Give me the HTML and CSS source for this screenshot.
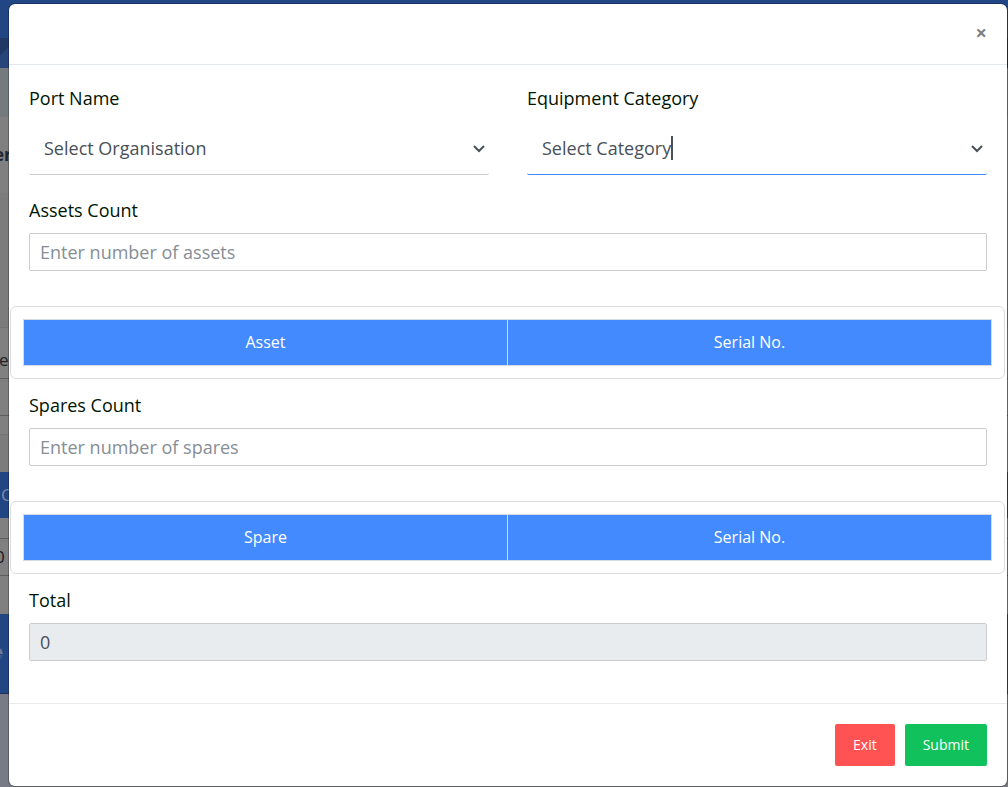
FILE: index.html
```html
<!DOCTYPE html>
<html lang="en">
<head>
<meta charset="utf-8">
<meta name="viewport" content="width=device-width, initial-scale=1">
<title>Equipment count</title>
<link rel="stylesheet" href="styles.css">
</head>
<body>
<div class="screen">
  <div class="page" aria-hidden="true">
    <div class="band band-top"></div>
    <div class="band band-nav"></div>
    <div class="band band-crumb"></div>
    <div class="band band-title"><b>er</b></div>
    <div class="band band-space"></div>
    <div class="band band-row"><span>e</span></div>
    <div class="band band-line"></div>
    <div class="band band-end"></div>
    <div class="band band-gap"></div>
    <div class="band band-head"><span class="clip-right">C</span></div>
    <div class="band band-blank"></div>
    <div class="band band-cell"><span class="clip-left">0</span></div>
    <div class="band band-rest"></div>
    <div class="band band-foot"><svg viewBox="0 0 9 14" width="9" height="14"><path d="M-2 7L1 1L3 7Z" fill="#6f7c98"/><path d="M-2 8H3L1 13Z" fill="#3a5689"/></svg></div>
    <div class="band band-bottom"></div>
  </div>

  <form class="modal" role="dialog" aria-label="Equipment count">
    <header class="modal-header">
      <button type="button" class="close" aria-label="Close">×</button>
    </header>

    <div class="modal-body">
      <div class="columns">
        <div class="field">
          <label for="port">Port Name</label>
          <div class="picker">
            <select id="port"><option>Select Organisation</option></select>
            <svg class="chevron" viewBox="0 0 12 8" width="12" height="8"><path d="M1 1L6 6L11 1" fill="none" stroke="#495057" stroke-width="2"/></svg>
          </div>
        </div>
        <div class="field">
          <label for="category">Equipment Category</label>
          <div class="picker picker-active">
            <select id="category"><option>Select Category</option></select>
            <span class="caret"></span>
            <svg class="chevron" viewBox="0 0 12 8" width="12" height="8"><path d="M1 1L6 6L11 1" fill="none" stroke="#495057" stroke-width="2"/></svg>
          </div>
        </div>
      </div>

      <div class="field field-text">
        <label for="assets">Assets Count</label>
        <input id="assets" type="text" placeholder="Enter number of assets">
      </div>
      <div class="card">
        <table>
          <thead><tr><th scope="col">Asset</th><th scope="col">Serial No.</th></tr></thead>
        </table>
      </div>

      <div class="field field-text">
        <label for="spares">Spares Count</label>
        <input id="spares" type="text" placeholder="Enter number of spares">
      </div>
      <div class="card">
        <table>
          <thead><tr><th scope="col">Spare</th><th scope="col">Serial No.</th></tr></thead>
        </table>
      </div>

      <div class="field field-text">
        <label for="total">Total</label>
        <input id="total" type="text" value="0" readonly>
      </div>
    </div>

    <footer class="modal-footer">
      <button type="button" class="btn btn-exit">Exit</button>
      <button type="submit" class="btn btn-submit">Submit</button>
    </footer>
  </form>
</div>
</body>
</html>
```

FILE: styles.css
```css
* { box-sizing: border-box; }

body {
  margin: 0;
  font-family: "Open Sans", "Noto Sans", sans-serif;
  font-size: 18px;
  line-height: 24px;
  color: #001500;
}

.screen {
  display: grid;
  min-height: 100vh;
}

.page,
.modal { grid-area: 1 / 1; }

/* Dimmed page behind the dialog */
.page {
  display: flex;
  flex-direction: column;
  overflow: hidden;
  background: #787b85;
  color: #1f2226;
}

.band {
  display: flex;
  align-items: center;
  flex-shrink: 0;
  height: 37px;
  background: #808080;
}

.band b { margin-left: -6px; font-size: 17px; color: #1a2433; }
.band span { margin-left: -1px; font-size: 17px; }
.band .clip-right { margin-left: 1px; color: #7d8aa3; }
.band .clip-left { margin-left: -5px; color: #14181c; }
.band-top { height: 38px; background: #224583; }
.band-nav { height: 30px; background: linear-gradient(135deg, #1f3864 12px, #28457b 13px, #1d3157); }
.band-crumb { height: 49px; background: #757b7d; }
.band-title { height: 76px; }
.band-space { height: 134px; background: #7c7c7c; }
.band-row { height: 51px; padding-top: 14px; border-top: 1px solid #757575; }
.band-line { border-top: 1px solid #5f5f5f; }
.band-end { height: 20px; border-top: 1px solid #5f5f5f; border-bottom: 1px solid #757575; }
.band-gap { background: #7c7c7c; }
.band-head { height: 46px; background: #224583; }
.band-blank { height: 20px; }
.band-cell { border-top: 1px solid #5f5f5f; }
.band-rest { height: 39px; border-top: 1px solid #5f5f5f; }
.band-foot { height: 80px; background: #224583; border-bottom: 1px solid #18305c; }
.band-bottom { flex: 1; background: #787b85; }

/* Dialog */
.modal {
  align-self: start;
  margin: 4px 1px 1px 9px;
  border-radius: 6px;
  background: #fff;
  box-shadow: 0 0 0 1px rgba(0, 0, 0, 0.25);
}

.modal-header {
  display: flex;
  align-items: center;
  justify-content: flex-end;
  height: 61px;
  padding: 0 20px;
  border-bottom: 1px solid #e3e8ec;
}

.close {
  padding: 0 0 2px;
  border: 0;
  background: none;
  font-family: inherit;
  font-size: 20px;
  font-weight: 700;
  line-height: 24px;
  color: #7f7f7f;
}

.modal-body { padding: 21px 2px 42px 1px; }

.columns {
  display: grid;
  grid-template-columns: 1fr 1fr;
  gap: 38px;
  margin: 0 18px 23px 19px;
}

.field {
  display: flex;
  flex-direction: column;
  gap: 14px;
}

.field-text {
  gap: 11px;
  margin: 0 18px 0 19px;
}

.picker {
  position: relative;
  display: grid;
  align-items: center;
  border-bottom: 1px solid #ccc;
  border-radius: 2px;
}

.picker-active { border-color: #448aff; }

.picker select {
  grid-area: 1 / 1;
  appearance: none;
  width: 100%;
  height: 50px;
  padding: 0 30px 2px 15px;
  border: 0;
  outline: 0;
  background: transparent;
  font: inherit;
  color: #495057;
}

.chevron {
  grid-area: 1 / 1;
  justify-self: end;
  margin-right: 4px;
  pointer-events: none;
}

.caret {
  position: absolute;
  top: 12px;
  left: 144px;
  width: 2px;
  height: 24px;
  background: #495057;
}

.field-text input {
  width: 100%;
  height: 38px;
  padding: 0 10px;
  border: 1px solid #ccc;
  border-radius: 2px;
  font: inherit;
  color: #495057;
}

.field-text input::placeholder { color: #868e96; opacity: 1; }
.field-text input[readonly] { background: #e9ecef; }

.card {
  margin: 35px 0 14px;
  padding: 12px;
  border: 1px solid #ddd;
  border-radius: 6px;
}

table {
  width: 100%;
  border-collapse: collapse;
  table-layout: fixed;
}

th {
  height: 46px;
  padding: 0 0 2px;
  border: 1px solid #d4dbe5;
  background: #448aff;
  font-size: 16px;
  font-weight: 500;
  color: #fff;
}

.modal-footer {
  display: flex;
  justify-content: flex-end;
  gap: 10px;
  padding: 20px;
  border-top: 1px solid #e9ecef;
}

.btn {
  height: 42px;
  padding: 0 18px 2px;
  border: 0;
  border-radius: 2px;
  font-family: inherit;
  font-size: 14px;
  color: #fff;
}

.btn-exit { background: #ff5252; }
.btn-submit { background: #11c15b; }
```
